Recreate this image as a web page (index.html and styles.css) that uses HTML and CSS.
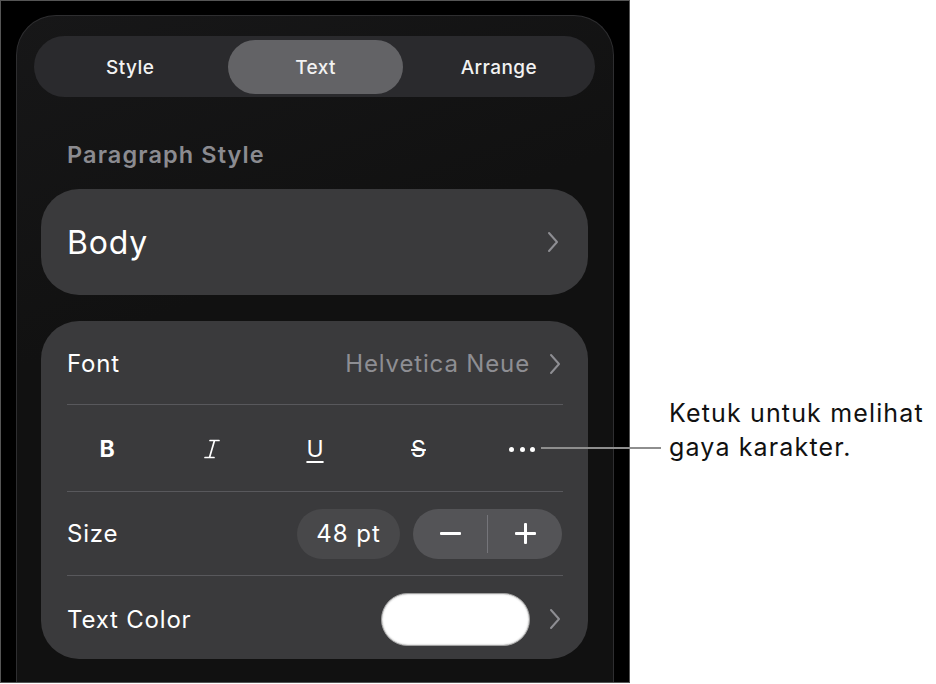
FILE: index.html
```html
<!DOCTYPE html>
<html>
  <head>
    <title>Text Format Panel</title>
    <link rel="stylesheet" href="styles.css">
  </head>
  <body>
    <div class="screen">
      <div class="device">
        <div class="panel">
          <div class="tabs">
            <div class="tab">Style</div>
            <div class="tab active">Text</div>
            <div class="tab">Arrange</div>
          </div>

          <h3 class="section-title">Paragraph Style</h3>

          <div class="card para-card">
            <span class="para-name">Body</span>
            <svg class="chevron" viewBox="0 0 14 22"><path d="M3 2 L11 11 L3 20"/></svg>
          </div>

          <div class="card format-card">
            <div class="row">
              <span class="label">Font</span>
              <span class="value">Helvetica Neue</span>
              <svg class="chevron" viewBox="0 0 14 22"><path d="M3 2 L11 11 L3 20"/></svg>
            </div>
            <div class="row styles-row">
              <span class="fmt fmt-bold">B</span>
              <span class="fmt fmt-italic">
                <svg viewBox="0 0 16 20"><path d="M6 1.5 H15 M1 18.5 H10 M10.5 1.5 L5.5 18.5"/></svg>
              </span>
              <span class="fmt fmt-under">U</span>
              <span class="fmt fmt-strike">S</span>
              <span class="fmt fmt-more"><i></i><i></i><i></i></span>
            </div>
            <div class="row">
              <span class="label">Size</span>
              <span class="size-value">48 pt</span>
              <div class="stepper">
                <span class="step minus"><b></b></span>
                <span class="step plus"><b></b><b class="vert"></b></span>
              </div>
            </div>
            <div class="row">
              <span class="label">Text Color</span>
              <span class="swatch"></span>
              <svg class="chevron" viewBox="0 0 14 22"><path d="M3 2 L11 11 L3 20"/></svg>
            </div>
          </div>
        </div>
      </div>

      <!-- callout -->
      <div class="callout-line"></div>
      <div class="callout">Ketuk untuk melihat<br>gaya karakter.</div>
    </div>
  </body>
</html>
```

FILE: styles.css
```css
* {
  box-sizing: border-box;
  margin: 0;
  padding: 0;
}

body {
  background: #fff;
  font-family: Inter, "Noto Sans", sans-serif;
  color: #fff;
  letter-spacing: 0.6px;
}

.screen {
  position: relative;
  width: 936px;
  height: 684px;
}

.device {
  width: 630px;
  height: 683px;
  background: #000;
  border: 1px solid #555;
  padding: 14px 0 0 15px;
  display: flex;
  flex-direction: column;
}

.panel {
  flex: 1;
  width: 598px;
  background: linear-gradient(160deg, #171718, #111 40%);
  border: 1px solid #2e2e30;
  border-bottom: none;
  border-radius: 40px 40px 0 0;
  padding: 20px 18px 0 17px;
}

.tabs {
  display: grid;
  grid-template-columns: 1fr 1fr 1fr;
  height: 61px;
  padding: 4px 4px 3px;
  border-radius: 31px;
  background: #2a2a2d;
}

.tab {
  display: flex;
  align-items: center;
  justify-content: center;
  border-radius: 28px;
  font-size: 19px;
  font-weight: 500;
  letter-spacing: 0.4px;
  color: #f2f2f2;
}

.tab.active {
  background: #636366;
  margin: 0 4px 0 6px;
}

.section-title {
  margin: 43px 0 0 33px;
  height: 30px;
  line-height: 30px;
  font-size: 23.5px;
  font-weight: 600;
  letter-spacing: 1.1px;
  color: #8b8b90;
}

.card {
  margin: 0 7px;
  background: #3a3a3c;
  border-radius: 38px;
}

.para-card {
  margin-top: 19px;
  height: 106px;
  display: flex;
  align-items: center;
  padding: 0 28px 0 26px;
}

.para-name {
  flex: 1;
  font-size: 32px;
  letter-spacing: 0.8px;
  color: #fff;
}

.chevron {
  width: 14px;
  height: 22px;
  fill: none;
  stroke: #8e8e93;
  stroke-width: 2;
  stroke-linecap: round;
  stroke-linejoin: round;
}

.format-card {
  margin-top: 26px;
  padding: 0 25px 0 26px;
}

.row {
  display: flex;
  align-items: center;
  height: 84px;
  border-bottom: 1px solid #58585c;
}

.row:first-child {
  padding-top: 2px;
}

.row:last-child {
  border-bottom: none;
  height: 83px;
  padding-top: 3px;
}

.row .chevron {
  margin-right: 1px;
}

.label {
  flex: 1;
  font-size: 24px;
  letter-spacing: 0.8px;
  color: #fff;
}

.value {
  font-size: 24px;
  letter-spacing: 0.85px;
  color: #8e8e93;
  margin-right: 18px;
}

.styles-row {
  height: 87px;
  display: grid;
  grid-template-columns: repeat(5, 103.5px);
  justify-content: center;
  align-items: center;
  padding-top: 2px;
}

.fmt {
  display: flex;
  justify-content: center;
  font-size: 23px;
  letter-spacing: 0;
  color: #fff;
}

.fmt-bold {
  font-weight: 700;
  margin-left: -2px;
}

.fmt-italic svg {
  width: 16px;
  height: 20px;
  fill: none;
  stroke: #fff;
  stroke-width: 1.7;
  stroke-linecap: round;
}

.fmt-under {
  text-decoration: underline;
  text-underline-offset: 4px;
  text-decoration-thickness: 1.5px;
}

.fmt-strike {
  text-decoration: line-through;
  text-decoration-thickness: 1.5px;
}

.fmt-more {
  gap: 5.5px;
}

.fmt-more i {
  width: 5px;
  height: 5px;
  border-radius: 50%;
  background: #fff;
}

.size-value {
  width: 103px;
  height: 50px;
  line-height: 50px;
  border-radius: 25px;
  background: #48484a;
  text-align: center;
  font-size: 24px;
  letter-spacing: 1px;
  color: #fff;
  margin-right: 13px;
}

.stepper {
  display: flex;
  width: 149px;
  height: 50px;
  border-radius: 25px;
  background: #545457;
  margin-right: 1px;
  align-items: center;
}

.step {
  position: relative;
  flex: 1;
  height: 100%;
  display: flex;
  align-items: center;
  justify-content: center;
}

.minus {
  border-right: 1.5px solid #75757a;
  height: 38px;
}

.step b {
  display: block;
  width: 21px;
  height: 3px;
  border-radius: 1px;
  background: #fff;
}

.step b.vert {
  position: absolute;
  width: 3px;
  height: 21px;
}

.swatch {
  width: 149px;
  height: 53px;
  border-radius: 27px;
  background: #fff;
  border: 1px solid #a0a0a0;
  box-shadow: inset 0 0 2px rgba(0, 0, 0, 0.35);
  margin-right: 18px;
}

.callout-line {
  position: absolute;
  left: 541px;
  top: 447px;
  width: 120px;
  height: 2px;
  background: #8e8e8e;
}

.callout {
  position: absolute;
  left: 669px;
  top: 396px;
  font-size: 25px;
  line-height: 34px;
  letter-spacing: 1.15px;
  color: #111;
  white-space: nowrap;
}
```
